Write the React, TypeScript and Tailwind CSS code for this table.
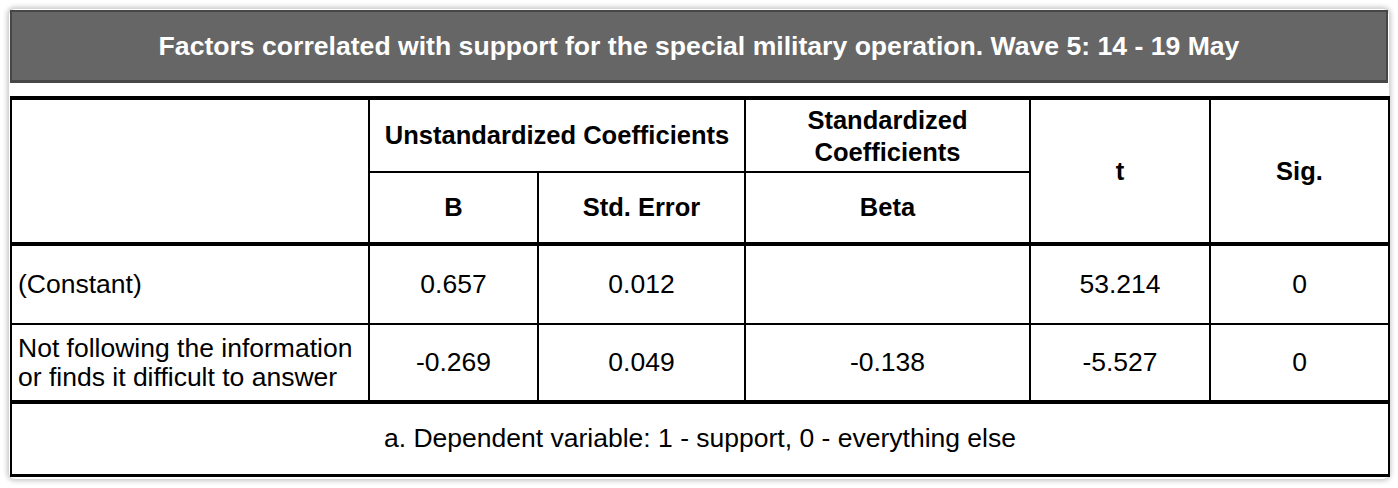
export default function App() {
  const rows = [
    {
      label: "(Constant)",
      b: "0.657",
      se: "0.012",
      beta: "",
      t: "53.214",
      sig: "0",
    },
    {
      label: "Not following the information or finds it difficult to answer",
      b: "-0.269",
      se: "0.049",
      beta: "-0.138",
      t: "-5.527",
      sig: "0",
    },
  ];

  return (
    <div className="w-[1398px] h-[488px] bg-white p-[9px] font-['Liberation_Sans',Arial,sans-serif] text-black">
      <div className="h-[470px] rounded-[6px] bg-white p-px shadow-[0_0_5px_2px_rgba(0,0,0,0.22)]">
        {/* title bar */}
        <div className="h-[73px] flex items-center justify-center bg-[#666666] border-2 border-b-[3px] border-[#474747]">
          <h1 className="text-[26.6px] font-bold text-white leading-none">
            Factors correlated with support for the special military operation. Wave 5: 14 - 19 May
          </h1>
        </div>

        <table className="mt-[13px] w-[1378px] table-fixed border-collapse text-[26.5px] leading-[29px]">
          <colgroup>
            <col className="w-[358px]" />
            <col className="w-[169px]" />
            <col className="w-[207px]" />
            <col className="w-[285px]" />
            <col className="w-[180px]" />
            <col className="w-[179px]" />
          </colgroup>
          <thead className="font-bold text-[25.5px]">
            <tr className="h-[74px]">
              <th rowSpan={2} className="border-2 border-t-4 border-b-4 border-black"></th>
              <th colSpan={2} className="border-2 border-t-4 border-black">
                Unstandardized Coefficients
              </th>
              <th className="border-2 border-t-4 border-black leading-[32px] pt-px">
                Standardized
                <br />
                Coefficients
              </th>
              <th rowSpan={2} className="border-2 border-t-4 border-b-4 border-black">
                t
              </th>
              <th rowSpan={2} className="border-2 border-t-4 border-b-4 border-black">
                Sig.
              </th>
            </tr>
            <tr className="h-[72px]">
              <th className="border-2 border-b-4 border-black">B</th>
              <th className="border-2 border-b-4 border-black">Std. Error</th>
              <th className="border-2 border-b-4 border-black">Beta</th>
            </tr>
          </thead>
          <tbody>
            {rows.map((r, i) => (
              <tr key={i} className={i === 0 ? "h-[80px]" : "h-[78px]"}>
                <td className={`border-2 border-black px-[6px] text-left ${i === 1 ? "border-b-4" : ""}`}>
                  {r.label}
                </td>
                <td className={`border-2 border-black text-center ${i === 1 ? "border-b-4" : ""}`}>{r.b}</td>
                <td className={`border-2 border-black text-center ${i === 1 ? "border-b-4" : ""}`}>{r.se}</td>
                <td className={`border-2 border-black text-center ${i === 1 ? "border-b-4" : ""}`}>{r.beta}</td>
                <td className={`border-2 border-black text-center ${i === 1 ? "border-b-4" : ""}`}>{r.t}</td>
                <td className={`border-2 border-black text-center ${i === 1 ? "border-b-4" : ""}`}>{r.sig}</td>
              </tr>
            ))}
            <tr className="h-[73px]">
              <td colSpan={6} className="border-2 border-b-[3px] border-black text-center">
                a. Dependent variable: 1 - support, 0 - everything else
              </td>
            </tr>
          </tbody>
        </table>
      </div>
    </div>
  );
}
